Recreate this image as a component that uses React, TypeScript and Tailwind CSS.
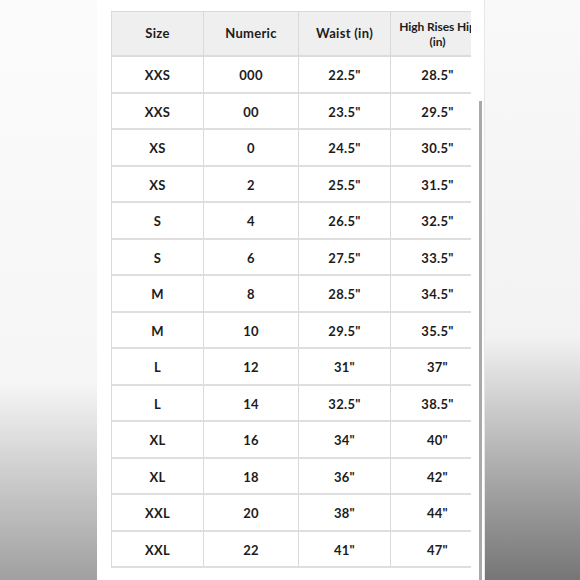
const rows: [string, string, string, string][] = [
  ["XXS", "000", "22.5\"", "28.5\""],
  ["XXS", "00", "23.5\"", "29.5\""],
  ["XS", "0", "24.5\"", "30.5\""],
  ["XS", "2", "25.5\"", "31.5\""],
  ["S", "4", "26.5\"", "32.5\""],
  ["S", "6", "27.5\"", "33.5\""],
  ["M", "8", "28.5\"", "34.5\""],
  ["M", "10", "29.5\"", "35.5\""],
  ["L", "12", "31\"", "37\""],
  ["L", "14", "32.5\"", "38.5\""],
  ["XL", "16", "34\"", "40\""],
  ["XL", "18", "36\"", "42\""],
  ["XXL", "20", "38\"", "44\""],
  ["XXL", "22", "41\"", "47\""],
];

const widths = ["w-[92px]", "w-[95px]", "w-[92px]", "w-[94px]"];

function Cell({ i, head, children }: { i: number; head?: boolean; children: React.ReactNode }) {
  return (
    <div
      className={`${widths[i]} shrink-0 flex items-center justify-center text-center border-r border-[#d9d9d9] px-1 ${
        head ? "" : "pt-[3px]"
      }`}
    >
      {children}
    </div>
  );
}

export default function App() {
  return (
    <div
      className="flex w-[580px] h-[580px] overflow-hidden bg-white"
      style={{ fontFamily: "Lato, 'Open Sans', sans-serif" }}
    >
      <div className="w-[97px] shrink-0 bg-linear-to-b from-[#fbfbfb] from-0% via-[#f6f6f6] via-66% to-[#a0a0a0]" />

      <div className="relative w-[387px] shrink-0 bg-white pt-[11px] pl-[14px]">
        <div className="w-[360px] overflow-hidden">
          <div className="w-[373px] border-l border-t border-[#d9d9d9] text-[13px] tracking-[0.3px] font-bold text-[#1c1c1c]">
            <div className="flex h-[45px] bg-[#efefef] border-b-2 border-[#dcdcdc] leading-[15px]">
              <Cell i={0} head>
                Size
              </Cell>
              <Cell i={1} head>
                Numeric
              </Cell>
              <Cell i={2} head>
                Waist (in)
              </Cell>
              <Cell i={3} head>
                <span className="whitespace-nowrap text-[12px] tracking-[-0.1px]">
                  High Rises Hip
                  <br />
                  (in)
                </span>
              </Cell>
            </div>
            {rows.map((r, idx) => (
              <div key={idx} className="flex h-[36.5px] border-b-2 border-[#dedede]">
                {r.map((c, i) => (
                  <Cell key={i} i={i}>
                    {c}
                  </Cell>
                ))}
              </div>
            ))}
          </div>
        </div>
        <div className="absolute left-[382px] top-[101px] bottom-0 w-[3px] bg-[#a9a9a9]" />
      </div>

      <div className="flex-1 border-l border-[#e6e6e6] bg-linear-to-b from-[#f9f9f9] from-0% via-[#f2f2f2] via-58% to-[#767676]" />
    </div>
  );
}
